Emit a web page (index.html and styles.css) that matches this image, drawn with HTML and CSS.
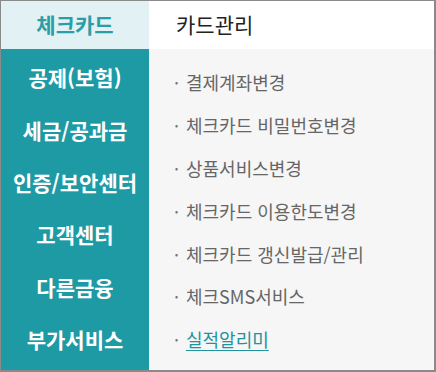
FILE: index.html
```html
<!DOCTYPE html>
<html lang="ko">
<head>
<meta charset="utf-8">
<link rel="stylesheet" href="styles.css">
</head>
<body>
<div class="panel">
  <div class="side-head">체크카드</div>
  <div class="main-head">카드관리</div>
  <ul class="side-menu">
    <li>공제(보험)</li>
    <li>세금/공과금</li>
    <li>인증/보안센터</li>
    <li>고객센터</li>
    <li>다른금융</li>
    <li>부가서비스</li>
  </ul>
  <ul class="sub-menu">
    <li><span class="dot">·</span>결제계좌변경</li>
    <li><span class="dot">·</span>체크카드 비밀번호변경</li>
    <li><span class="dot">·</span>상품서비스변경</li>
    <li><span class="dot">·</span>체크카드 이용한도변경</li>
    <li><span class="dot">·</span>체크카드 갱신발급/관리</li>
    <li><span class="dot">·</span>체크SMS서비스</li>
    <li><span class="dot">·</span><a class="active" href="#">실적알리미</a></li>
  </ul>
</div>
</body>
</html>
```

FILE: styles.css
```css
html, body {
  margin: 0;
  padding: 0;
  background: #ffffff;
}
body {
  font-family: "Noto Sans CJK KR", "Noto Sans", sans-serif;
}
.panel {
  box-sizing: border-box;
  width: 436px;
  height: 372px;
  border-style: solid;
  border-color: #8a8a8a;
  border-width: 1px 2px 2px 1px;
  display: grid;
  grid-template-columns: 148px 1fr;
  grid-template-rows: 48px 1fr;
}
.side-head {
  background: #e2f1f3;
  color: #2a9da7;
  font-size: 21px;
  font-weight: 700;
  display: flex;
  align-items: center;
  justify-content: center;
  padding-bottom: 3px;
  box-sizing: border-box;
}
.main-head {
  background: #ffffff;
  color: #222222;
  font-size: 21px;
  display: flex;
  align-items: center;
  padding-left: 27px;
  padding-bottom: 2px;
  box-sizing: border-box;
}
.side-menu {
  list-style: none;
  margin: 0;
  padding: 2px 0 0;
  background: #1e9aa5;
  display: flex;
  flex-direction: column;
}
.side-menu li {
  height: 52.4px;
  display: flex;
  align-items: center;
  justify-content: center;
  color: #ffffff;
  font-size: 21px;
  font-weight: 700;
}
.sub-menu {
  list-style: none;
  margin: 0;
  padding: 12px 0 0 25px;
  background: #f6f6f6;
  display: flex;
  flex-direction: column;
}
.sub-menu li {
  height: 42.8px;
  display: flex;
  align-items: center;
  color: #666666;
  font-size: 18px;
  white-space: nowrap;
}
.dot {
  width: 12px;
  color: #777777;
}
.active {
  color: #1f939e;
  text-decoration: underline;
  text-underline-offset: 3px;
}
```
